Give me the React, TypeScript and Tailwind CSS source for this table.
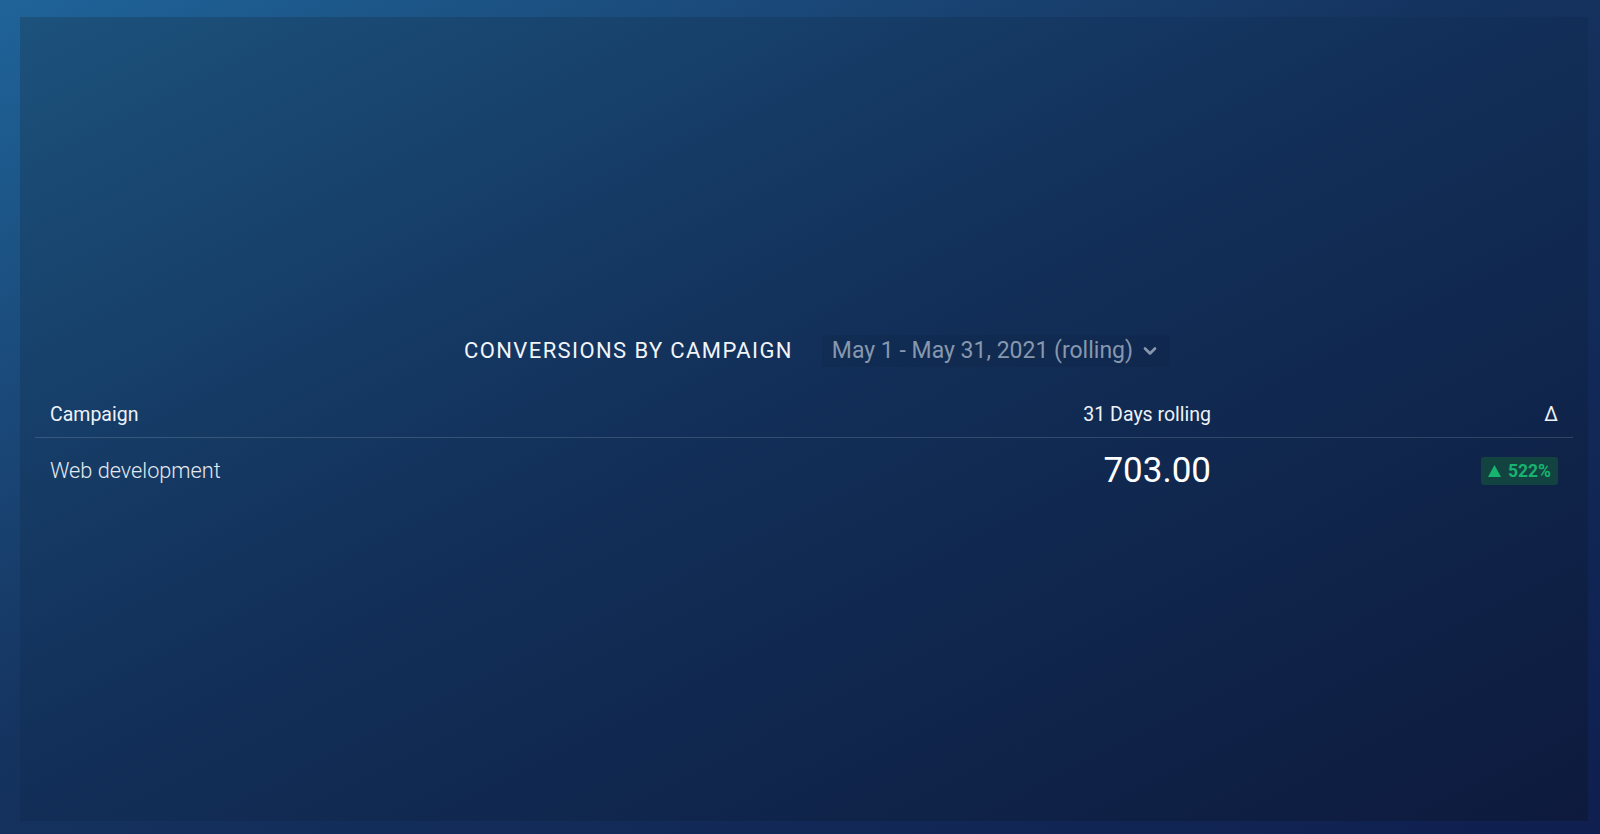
import { ChevronDown } from "lucide-react";

const rows = [{ campaign: "Web development", value: "703.00", change: "522%" }];

export default function App() {
  return (
    <div className="h-[834px] w-[1600px] bg-linear-to-br from-[#1f6499] via-[#15335f] via-45% to-[#0f1f4f] pl-[20px] pr-[12px] pt-[17px] pb-[13px] font-['Roboto',sans-serif]">
      <div className="flex h-full flex-col bg-linear-to-br from-[#1c527c] via-[#12305a] via-45% to-[#0d1a3d] px-[15px] pt-[318px]">
        <div className="flex items-center justify-center gap-[29px] pl-[26px]">
          <h2 className="text-[22px] leading-[28px] tracking-[1.4px] text-[#f1f5f9]">CONVERSIONS BY CAMPAIGN</h2>
          <button className="flex h-[32px] items-center gap-[7px] rounded-[3px] bg-black/[0.06] px-[10px] text-[23px] text-[#8797ae]">
            May 1 - May 31, 2021 (rolling)
            <ChevronDown className="h-[20px] w-[20px]" strokeWidth={3.2} />
          </button>
        </div>

        <div className="mt-[36px]">
          <div className="flex items-center border-b border-white/15 px-[15px] pb-[10px] text-[19.5px] leading-[24px] text-[#eef2f7]">
            <div className="flex-1">Campaign</div>
            <div className="w-[300px] text-right">31 Days rolling</div>
            <div className="w-[347px] text-right">Δ</div>
          </div>
          {rows.map((r) => (
            <div key={r.campaign} className="flex h-[66px] items-center px-[15px]">
              <div className="flex-1 text-[21.7px] font-light text-[#e3e9f0]">{r.campaign}</div>
              <div className="w-[300px] text-right text-[35px] leading-[40px] text-white">{r.value}</div>
              <div className="flex w-[347px] justify-end">
                <span className="flex h-[28px] items-center gap-[7px] rounded-[3px] bg-[#124341] px-[7px] text-[17.5px] font-bold text-[#17b46f]">
                  <svg width="13" height="12" viewBox="0 0 13 12" className="mb-[1px]">
                    <path d="M6.5 0 L13 12 L0 12 Z" fill="currentColor" />
                  </svg>
                  {r.change}
                </span>
              </div>
            </div>
          ))}
        </div>
      </div>
    </div>
  );
}
